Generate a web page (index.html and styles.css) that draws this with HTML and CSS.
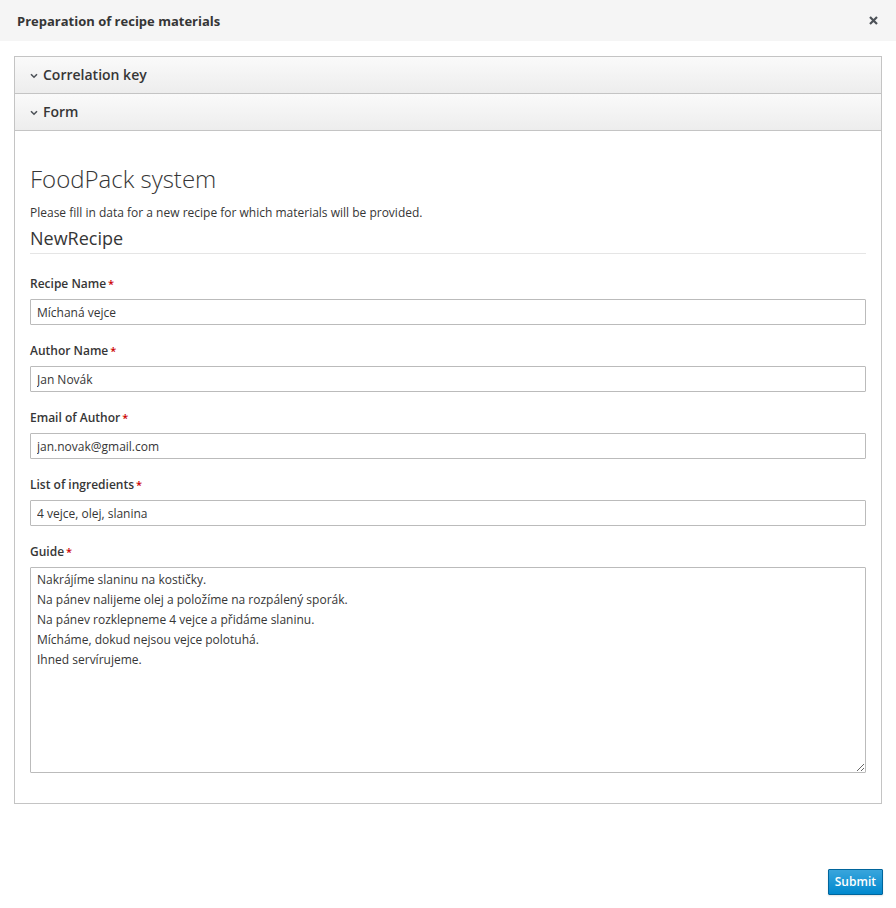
FILE: index.html
```html
<!DOCTYPE html>
<html lang="cs">
<head>
<meta charset="utf-8">
<title>Preparation of recipe materials</title>
<link rel="stylesheet" href="styles.css">
</head>
<body>
<div class="modal">
  <div class="modal-header">
    <h4 class="modal-title">Preparation of recipe materials</h4>
    <button class="close" type="button" aria-label="Close">
      <svg width="9" height="9" viewBox="0 0 9 9"><path d="M1 1 L8 8 M8 1 L1 8" stroke="#4d5258" stroke-width="2.2" fill="none"/></svg>
    </button>
  </div>
  <div class="modal-body">
    <div class="panel">
      <div class="panel-heading">
        <svg class="chev" width="8" height="6" viewBox="0 0 8 6"><path d="M1 1.2 L4 4.2 L7 1.2" stroke="#4d5258" stroke-width="1.6" fill="none"/></svg>
        <span class="panel-title">Correlation key</span>
      </div>
      <div class="panel-heading">
        <svg class="chev" width="8" height="6" viewBox="0 0 8 6"><path d="M1 1.2 L4 4.2 L7 1.2" stroke="#4d5258" stroke-width="1.6" fill="none"/></svg>
        <span class="panel-title">Form</span>
      </div>
      <div class="panel-body">
        <h1 class="form-title">FoodPack system</h1>
        <p class="form-desc">Please fill in data for a new recipe for which materials will be provided.</p>
        <div class="legend">NewRecipe</div>
        <div class="form-group">
          <label class="control-label">Recipe Name<span class="req">*</span></label>
          <input class="form-control" type="text" value="Míchaná vejce">
        </div>
        <div class="form-group">
          <label class="control-label">Author Name<span class="req">*</span></label>
          <input class="form-control" type="text" value="Jan Novák">
        </div>
        <div class="form-group">
          <label class="control-label">Email of Author<span class="req">*</span></label>
          <input class="form-control" type="text" value="jan.novak@gmail.com">
        </div>
        <div class="form-group">
          <label class="control-label">List of ingredients<span class="req">*</span></label>
          <input class="form-control" type="text" value="4 vejce, olej, slanina">
        </div>
        <div class="form-group">
          <label class="control-label">Guide<span class="req">*</span></label>
          <textarea class="form-control area">Nakrájíme slaninu na kostičky.
Na pánev nalijeme olej a položíme na rozpálený sporák.
Na pánev rozklepneme 4 vejce a přidáme slaninu.
Mícháme, dokud nejsou vejce polotuhá.
Ihned servírujeme.</textarea>
        </div>
      </div>
    </div>
  </div>
  <div class="modal-footer">
    <button class="btn-primary" type="button">Submit</button>
  </div>
</div>
</body>
</html>
```
FILE: styles.css
```css
* { box-sizing: border-box; }
html, body { margin: 0; padding: 0; background: #fff; }
body {
  font-family: "Open Sans", "Liberation Sans", sans-serif;
  font-size: 12px;
  line-height: 20px;
  color: #363636;
}
.modal-header {
  height: 41px;
  background: #f5f5f5;
  display: flex;
  align-items: center;
  justify-content: space-between;
  padding: 0 18px 0 17px;
}
.modal-title {
  margin: 0;
  font-size: 13px;
  font-weight: 700;
  color: #363636;
  line-height: 20px;
}
.close {
  border: 0;
  background: none;
  padding: 0;
  margin: 0;
  width: 9px;
  height: 9px;
  display: flex;
}
.modal-body {
  padding: 15px 14px 15px 14px;
}
.panel {
  border: 1px solid #c4c4c4;
  background: #fff;
}
.panel-heading {
  height: 37px;
  border-bottom: 1px solid #c4c4c4;
  background: linear-gradient(#fafafa, #ededed);
  display: flex;
  align-items: center;
  padding: 0 0 0 15px;
}
.chev { margin-right: 5px; margin-top: 1px; }
.panel-title {
  font-size: 14px;
  font-weight: 600;
  color: #363636;
}
.panel-body {
  padding: 15px 15px 14px;
}
.form-title {
  margin: 20px 0 11px;
  font-size: 24px;
  font-weight: 300;
  line-height: 26.4px;
  color: #363636;
}
.form-desc {
  margin: 0 0 5px;
}
.legend {
  font-size: 18px;
  line-height: 20px;
  padding-bottom: 5px;
  border-bottom: 1px solid #e5e5e5;
  margin-bottom: 20px;
  color: #363636;
}
.form-group {
  margin-bottom: 16px;
}
.control-label {
  display: block;
  font-weight: 600;
  margin-bottom: 5px;
}
.req {
  color: #c00;
  margin-left: 2px;
  font-size: 11px;
}
.form-control {
  display: block;
  width: 100%;
  height: 26px;
  padding: 2px 6px;
  border: 1px solid #bbb;
  border-radius: 1px;
  font-family: inherit;
  font-size: 12px;
  line-height: 20px;
  color: #363636;
  background: #fff;
  margin: 0;
}
.area {
  height: 206px;
  resize: vertical;
}
.modal-footer {
  display: flex;
  justify-content: flex-end;
  padding: 50px 13px 15px;
}
.btn-primary {
  height: 26px;
  padding: 2px 6px;
  border: 1px solid #00659c;
  border-radius: 1px;
  background: linear-gradient(#39a5dc, #0088ce);
  color: #fff;
  font-family: inherit;
  font-size: 12px;
  font-weight: 600;
  line-height: 20px;
  box-shadow: 0 1px 2px rgba(0,0,0,0.12);
}
```
